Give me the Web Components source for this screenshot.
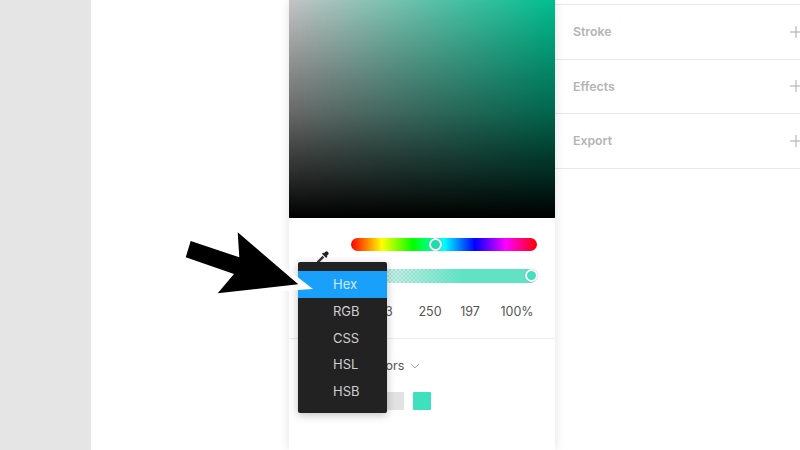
<!DOCTYPE html>
<html>
<head>
<meta charset="utf-8">
<title>Color picker</title>
<style>
  html, body { margin: 0; padding: 0; background: #fff; }
  body { width: 800px; height: 450px; overflow: hidden; font-family: Inter, "Liberation Sans", sans-serif; }
</style>
</head>
<body>
<design-stage>
  <color-picker></color-picker>
  <props-panel>
    <props-row>Stroke</props-row>
    <props-row>Effects</props-row>
    <props-row>Export</props-row>
  </props-panel>
</design-stage>
<format-menu selected="Hex"></format-menu>
<big-arrow></big-arrow>

<script>
// Page frame: grey margin, canvas, picker column, properties column
class DesignStage extends HTMLElement {
  constructor() {
    super();
    this.attachShadow({ mode: 'open' }).innerHTML = `
      <style>
        :host {
          display: grid;
          grid-template-columns: 91px 197.5px 266.5px 1fr;
          width: 800px;
          height: 450px;
          overflow: hidden;
          background: #fff;
        }
        .margin { background: #e5e5e5; }
      </style>
      <div class="margin"></div>
      <div></div>
      <slot></slot>
    `;
  }
}

const pickerStyle = `
  :host {
    display: block;
    position: relative;
    z-index: 1;
    height: 450px;
    background: #fff;
    box-shadow: 0 0 10px rgba(0, 0, 0, .12);
    color: #555;
    font-size: 12.5px;
  }
  .field {
    height: 217.5px;
    background:
      linear-gradient(to bottom, rgba(0,0,0,.23), rgba(0,0,0,.58) 50%, #000),
      linear-gradient(to right, #fff, #00f7bb);
  }
  .sliders {
    display: grid;
    grid-template-columns: 62px 186px;
    row-gap: 18px;
    padding-top: 20px;
  }
  .dropper {
    grid-row: 1 / span 2;
    justify-self: end;
    align-self: center;
    margin: 0 22px 4px 0;
    width: 14px;
    height: 14px;
    display: block;
  }
  .track {
    position: relative;
    height: 13.5px;
    border-radius: 7px;
  }
  .hue {
    background: linear-gradient(to right, #f00, #ff0 16.6%, #0f0 33.3%, #0ff 50%, #00f 66.6%, #f0f 83.3%, #f00);
  }
  .alpha {
    background:
      linear-gradient(to right, rgba(97,226,197,0), #61e2c5 60%),
      repeating-conic-gradient(#dedede 0 25%, #fff 0 50%) 0 0 / 4px 4px;
  }
  .thumb {
    position: absolute;
    top: 50%;
    width: 9px;
    height: 9px;
    margin: -6.5px 0 0 -6.5px;
    border: 2px solid #fff;
    border-radius: 50%;
    box-shadow: 0 0 1px rgba(0,0,0,.4);
    background: #1fdcae;
  }
  .values {
    display: grid;
    grid-template-columns: 42px 48px 32px 62px;
    padding: 21px 0 18px 75.5px;
    line-height: 16px;
    text-align: center;
    border-bottom: 1px solid #ededed;
  }
  .library {
    display: flex;
    align-items: center;
    gap: 6px;
    padding: 19px 0 0 97px;
    line-height: 16px;
    color: #555;
  }
  .swatches {
    display: flex;
    gap: 9px;
    padding: 18px 0 0 16px;
  }
  .swatch { width: 18px; height: 18px; background: #e2e2e2; }
  .swatch.mint { background: #3fe0bd; border-radius: 1px; }
`;

class ColorPicker extends HTMLElement {
  constructor() {
    super();
    this.attachShadow({ mode: 'open' });
  }

  connectedCallback() {
    this.shadowRoot.innerHTML = `
      <style>${pickerStyle}</style>
      <div class="field"></div>
      <div class="sliders">
        <svg class="dropper" viewBox="0 0 16 16">
          <path d="M10.2 2.6 L11.6 1.2 A1.8 1.8 0 0 1 14.8 4.4 L13.4 5.8 L14.2 6.6 L12.8 8 L8 3.2 L9.4 1.8 Z" fill="#222"/>
          <path d="M8.6 5.4 L10.6 7.4 L4.6 13.4 L2.2 14.2 L1.6 13.6 L2.6 11.4 Z" fill="#333"/>
        </svg>
        <div class="track hue"><span class="thumb" style="left:84.5px"></span></div>
        <div class="track alpha"><span class="thumb" style="left:180.5px;background:#3fe0bd"></span></div>
      </div>
      <div class="values">
        <span>63</span><span>250</span><span>197</span><span>100%</span>
      </div>
      <div class="library">
        <!-- only the end of this label shows beside the menu -->
        <span>ors</span>
        <svg width="10" height="6" viewBox="0 0 10 6"><path d="M1 1 L5 5 L9 1" fill="none" stroke="#aaa"/></svg>
      </div>
      <div class="swatches">
        <div class="swatch"></div>
        <div class="swatch"></div>
        <div class="swatch"></div>
        <div class="swatch"></div>
        <div class="swatch mint"></div>
      </div>
    `;
  }
}

class PropsPanel extends HTMLElement {
  constructor() {
    super();
    this.attachShadow({ mode: 'open' }).innerHTML = `
      <style>
        :host {
          display: block;
          padding-top: 4px;
        }
        .rule { height: 1px; background: #e8e8e8; }
      </style>
      <div class="rule"></div>
      <slot></slot>
    `;
  }
}

class PropsRow extends HTMLElement {
  constructor() {
    super();
    this.attachShadow({ mode: 'open' }).innerHTML = `
      <style>
        :host {
          display: flex;
          align-items: center;
          justify-content: space-between;
          box-sizing: border-box;
          height: 54.5px;
          padding-left: 18px;
          margin-right: -2px;
          border-bottom: 1px solid #e8e8e8;
          color: #b4b4b4;
          font-size: 12.3px;
          font-weight: 600;
        }
        svg { display: block; }
      </style>
      <slot></slot>
      <svg width="12" height="12" viewBox="0 0 12 12"><path d="M6 0 V12 M0 6 H12" stroke="#aaa" fill="none"/></svg>
    `;
  }
}

// Floats over the picker, so it is placed on the page and not in the flow
class FormatMenu extends HTMLElement {
  static get observedAttributes() {
    return ['selected'];
  }

  constructor() {
    super();
    this.attachShadow({ mode: 'open' });
    this._items = ['Hex', 'RGB', 'CSS', 'HSL', 'HSB'];
  }

  connectedCallback() {
    this._render();
  }

  attributeChangedCallback() {
    this._render();
  }

  _render() {
    const selected = this.getAttribute('selected');
    this.shadowRoot.innerHTML = `
      <style>
        :host {
          display: block;
          position: absolute;
          z-index: 2;
          left: 297.5px;
          top: 262px;
          width: 89px;
          box-sizing: border-box;
          padding: 9px 0 8px;
          background: #222;
          border-radius: 2px;
          box-shadow: 0 2px 8px rgba(0,0,0,.25);
          color: #cfcfcf;
          font-size: 13px;
        }
        div {
          height: 26.75px;
          line-height: 27.5px;
          padding-left: 35.5px;
        }
        .selected { background: #18a0fb; color: #d2ebfd; }
      </style>
      ${this._items.map(name => `<div class="${name === selected ? 'selected' : ''}">${name}</div>`).join('')}
    `;
  }
}

class BigArrow extends HTMLElement {
  constructor() {
    super();
    this.attachShadow({ mode: 'open' }).innerHTML = `
      <style>
        :host {
          display: block;
          position: absolute;
          z-index: 3;
          left: 180px;
          top: 225px;
          width: 140px;
          height: 75px;
        }
        svg { display: block; }
      </style>
      <svg width="140" height="75" viewBox="180 225 140 75">
        <path d="M238 231 L313 289 L216.5 295 Z" fill="#fff"/>
        <path d="M190.7 241 L239.3 257.3 L237.7 232.3 L298.3 284.3 L217.7 293.3 L234 274 L185.7 257.3 Z" fill="#000"/>
      </svg>
    `;
  }
}

customElements.define('design-stage', DesignStage);
customElements.define('color-picker', ColorPicker);
customElements.define('props-panel', PropsPanel);
customElements.define('props-row', PropsRow);
customElements.define('format-menu', FormatMenu);
customElements.define('big-arrow', BigArrow);
</script>
</body>
</html>
